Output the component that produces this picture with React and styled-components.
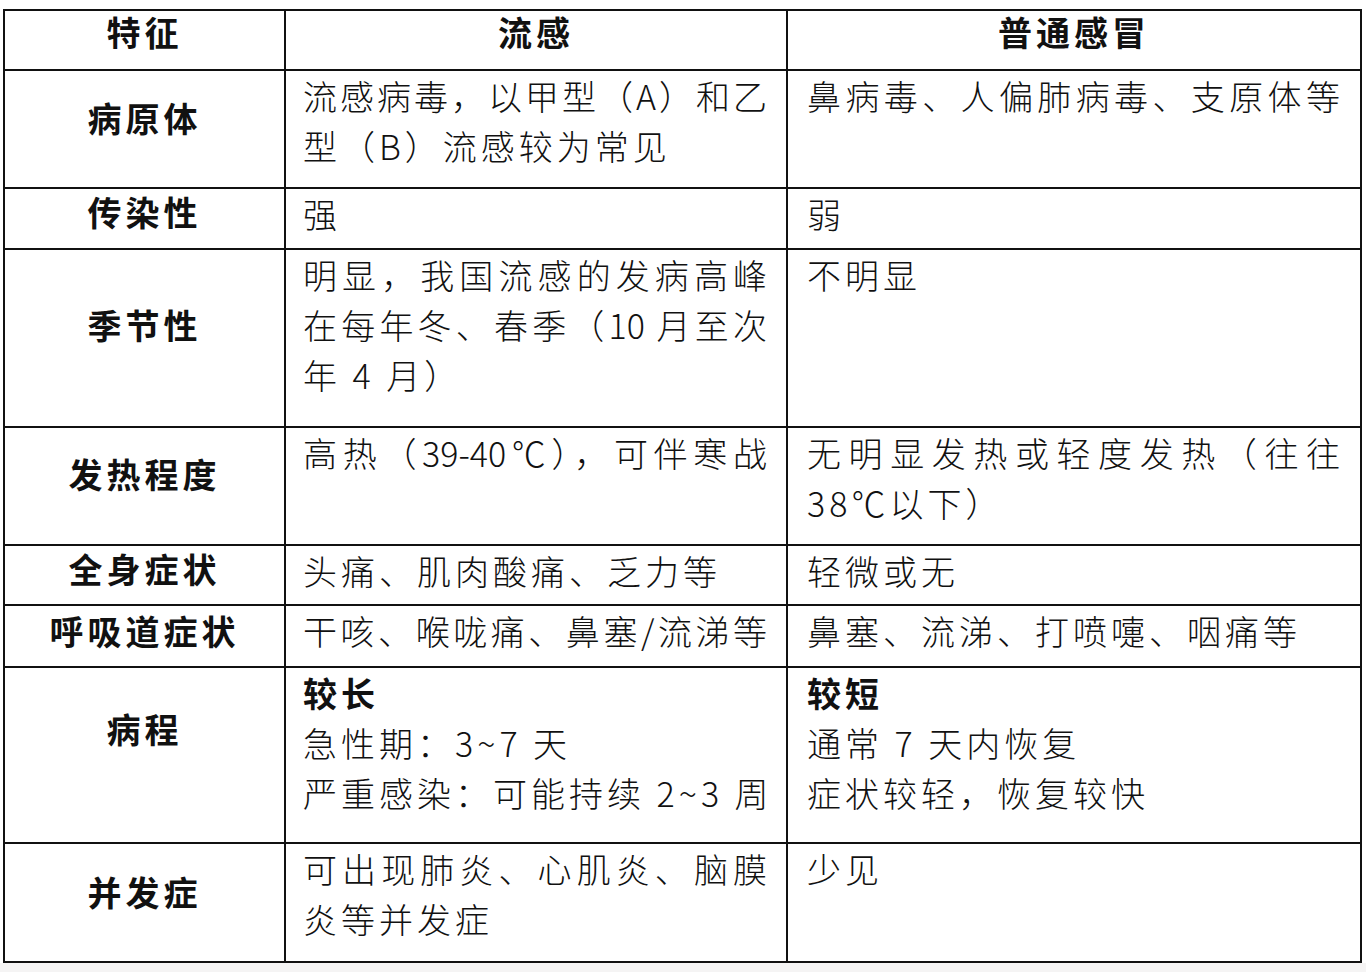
import React from "react";
import styled, { createGlobalStyle } from "styled-components";

const Global = createGlobalStyle`
  html, body { margin: 0; padding: 0; background: #f5f4f4; }
  body { font-family: "Noto Sans CJK SC", "Noto Sans", sans-serif; color: #111; }
`;

const Page = styled.div`
  background: #fff;
  padding: 9px 0 0 3px;
  width: 1366px;
  height: 963px;
  box-sizing: border-box;
`;

const Table = styled.div`
  display: grid;
  grid-template-columns: 281px 502px 574px;
  grid-template-rows: ${(p) => p.$rows.map((r) => `${r}px`).join(" ")};
  width: 1359px;
  border-left: 2px solid #111;
  border-top: 2px solid #111;
  box-sizing: border-box;
`;

const Cell = styled.div`
  box-sizing: border-box;
  border-right: 2px solid #111;
  border-bottom: 2px solid #111;
  font-size: 34px;
  line-height: 50px;
  letter-spacing: 4px;
  min-width: 0;
`;

const Label = styled(Cell)`
  display: flex;
  align-items: center;
  justify-content: center;
  font-weight: 700;
  line-height: 40px;
  padding: 0 0 ${(p) => p.$lift || 0}px 0;
`;

const Head = styled(Label)`
  line-height: 34px;
`;

const Content = styled(Cell)`
  padding: 0 ${(p) => p.$pr}px 0 ${(p) => p.$pl}px;
  font-weight: 300;
`;

const Line = styled.div`
  white-space: nowrap;
  text-align: left;
  text-align-last: ${(p) => (p.$justify ? "justify" : "left")};
  letter-spacing: ${(p) => (p.$justify ? "0px" : "4px")};
  font-weight: ${(p) => (p.$bold ? 700 : 300)};
`;

const rows = [60, 118, 61, 178, 118, 60, 62, 176, 119];

const data = [
  { label: "病原体", lift: 22, a: [["流感病毒，以甲型（A）和乙", 1], ["型（B）流感较为常见"]], b: [["鼻病毒、人偏肺病毒、支原体等", 1]] },
  { label: "传染性", lift: 13, a: [["强"]], b: [["弱"]] },
  { label: "季节性", lift: 26, a: [["明显，我国流感的发病高峰", 1], ["在每年冬、春季（10 月至次", 1], ["年 4 月）"]], b: [["不明显"]] },
  { label: "发热程度", lift: 24, a: [["高热（39-40℃），可伴寒战", 1]], b: [["无明显发热或轻度发热（往往", 1], ["38℃以下）"]] },
  { label: "全身症状", lift: 12, a: [["头痛、肌肉酸痛、乏力等"]], b: [["轻微或无"]] },
  { label: "呼吸道症状", lift: 10, a: [["干咳、喉咙痛、鼻塞/流涕等", 1]], b: [["鼻塞、流涕、打喷嚏、咽痛等"]] },
  { label: "病程", lift: 52, a: [["较长", 0, 1], ["急性期：3~7 天"], ["严重感染：可能持续 2~3 周"]], b: [["较短", 0, 1], ["通常 7 天内恢复"], ["症状较轻，恢复较快"]] },
  { label: "并发症", lift: 21, a: [["可出现肺炎、心肌炎、脑膜", 1], ["炎等并发症"]], b: [["少见"]] },
];

const renderLines = (lines) =>
  lines.map(([t, j, b], i) => (
    <Line key={i} $justify={!!j} $bold={!!b}>
      {t}
    </Line>
  ));

export default function App() {
  return (
    <>
      <Global />
      <Page>
        <Table $rows={rows}>
          <Head $lift={16}>特征</Head>
          <Head $lift={16}>流感</Head>
          <Head $lift={16}>普通感冒</Head>
          {data.map((r) => (
            <React.Fragment key={r.label}>
              <Label $lift={r.lift}>{r.label}</Label>
              <Content $pl={17} $pr={19}>{renderLines(r.a)}</Content>
              <Content $pl={19} $pr={20}>{renderLines(r.b)}</Content>
            </React.Fragment>
          ))}
        </Table>
      </Page>
    </>
  );
}
